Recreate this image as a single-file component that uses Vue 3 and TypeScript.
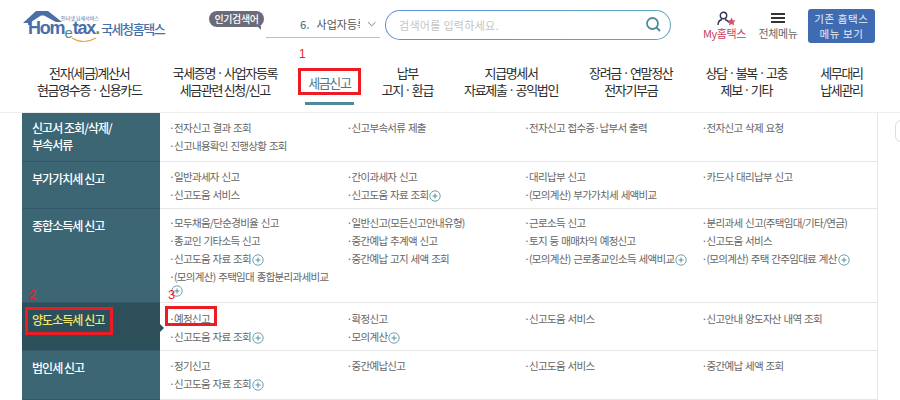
<template>
  <div class="page">
    <header class="top">
      <a class="logo">
        <svg class="house" width="42" height="26" viewBox="0 0 42 26">
          <path d="M0 14 L13 2 H25 L39 13 H33 L21 6.5 H18 L8 13 V16 H5 V14 Z" fill="#4a6fa8" />
        </svg>
        <span class="logo-sub">인터넷 납세서비스</span>
        <span class="logo-word">Hom<em>e</em>tax<i>.</i></span>
        <svg class="swoosh" width="26" height="6" viewBox="0 0 26 6">
          <path d="M1 1 Q12 8 25 1" fill="none" stroke="#e6a94a" stroke-width="1.2" />
        </svg>
        <span class="logo-name">국세청홈택스</span>
      </a>
      <span class="pill">인기검색어</span>
      <div class="rank">
        <span class="rank-no">6.</span>
        <span class="rank-text">사업자등록</span>
        <svg width="10" height="6" viewBox="0 0 10 6"><path d="M1 1 L5 5 L9 1" fill="none" stroke="#777" /></svg>
      </div>
      <div class="search">
        <span class="placeholder">검색어를 입력하세요.</span>
        <svg width="18" height="18" viewBox="0 0 18 18">
          <circle cx="7.5" cy="7.5" r="5.5" fill="none" stroke="#4f8a9a" stroke-width="1.8" />
          <path d="M11.6 11.6 L15 15" stroke="#4f8a9a" stroke-width="2" />
        </svg>
      </div>
      <div class="tool my">
        <svg width="20" height="16" viewBox="0 0 20 16">
          <circle cx="6.5" cy="4.5" r="3.2" fill="none" stroke="#2d3550" stroke-width="1.4" />
          <path d="M1 14 C1 10 3 9 5 8.5 M8 8.5 C9.5 9 11 10 12 11.5" fill="none" stroke="#2d3550" stroke-width="1.4" />
          <path d="M14.5 6.5 L15.8 9.2 L18.6 9.6 L16.6 11.6 L17.1 14.5 L14.5 13.1 L11.9 14.5 L12.4 11.6 L10.4 9.6 L13.2 9.2 Z" fill="#d9506a" />
        </svg>
        <span>My홈택스</span>
      </div>
      <div class="tool all">
        <div class="burger"><b></b><b></b><b></b></div>
        <span>전체메뉴</span>
      </div>
      <button class="old">기존 홈택스<br />메뉴 보기</button>
    </header>

    <nav class="gnb">
      <a v-for="item in navItems" :key="item[0]" :class="{ on: item[0] === '세금신고' }">
        <span>{{ item[0] }}</span>
        <span v-if="item[1]">{{ item[1] }}</span>
      </a>
    </nav>

    <main class="board">
      <section v-for="row in rows" :key="row.title" class="row" :class="{ active: row.active }" :style="{ height: row.height + 'px' }">
        <h3 v-html="row.title"></h3>
        <ul>
          <li v-for="(link, i) in row.links" :key="i">
            <span class="link">{{ link.replace('+', '') }}<svg v-if="link.endsWith('+')" class="plus" width="12" height="12" viewBox="0 0 12 12"><circle cx="6" cy="6" r="5.2" fill="none" stroke="#6ea1ad" /><path d="M3.5 6 H8.5 M6 3.5 V8.5" stroke="#5a8f9c" /></svg></span>
          </li>
        </ul>
      </section>

      <div class="mark box-tab"></div>
      <div class="mark box-row"></div>
      <div class="mark box-link"></div>
      <span class="num num-1">1</span>
      <span class="num num-2">2</span>
      <span class="num num-3">3</span>
    </main>
    <div class="side-tab"></div>
  </div>
</template>

<script setup lang="ts">
interface TaxRow {
  title: string
  height: number
  active?: boolean
  links: string[]
}

const navItems: string[][] = [
  ['전자(세금)계산서', '현금영수증 · 신용카드'],
  ['국세증명 · 사업자등록', '세금관련 신청/신고'],
  ['세금신고'],
  ['납부', '고지 · 환급'],
  ['지급명세서', '자료제출 · 공익법인'],
  ['장려금 · 연말정산', '전자기부금'],
  ['상담 · 불복 · 고충', '제보 · 기타'],
  ['세무대리', '납세관리'],
]

const rows: TaxRow[] = [
  {
    title: '신고서 조회/삭제/<br>부속서류',
    height: 49,
    links: ['전자신고 결과 조회', '신고부속서류 제출', '전자신고 접수증·납부서 출력', '전자신고 삭제 요청', '신고내용확인 진행상황 조회'],
  },
  {
    title: '부가가치세 신고',
    height: 47,
    links: ['일반과세자 신고', '간이과세자 신고', '대리납부 신고', '카드사 대리납부 신고', '신고도움 서비스', '신고도움 자료 조회+', '(모의계산) 부가가치세 세액비교'],
  },
  {
    title: '종합소득세 신고',
    height: 94,
    links: [
      '모두채움/단순경비율 신고', '일반신고(모든신고안내유형)', '근로소득 신고', '분리과세 신고(주택임대/기타/연금)',
      '종교인 기타소득 신고', '중간예납 추계액 신고', '토지 등 매매차익 예정신고', '신고도움 서비스',
      '신고도움 자료 조회+', '중간예납 고지 세액 조회', '(모의계산) 근로종교인소득 세액비교+', '(모의계산) 주택 간주임대료 계산+',
      '(모의계산) 주택임대 종합분리과세비교+',
    ],
  },
  {
    title: '양도소득세 신고',
    height: 48,
    active: true,
    links: ['예정신고', '확정신고', '신고도움 서비스', '신고안내 양도자산 내역 조회', '신고도움 자료 조회+', '모의계산+'],
  },
  {
    title: '법인세 신고',
    height: 49,
    links: ['정기신고', '중간예납신고', '신고도움 서비스', '중간예납 세액 조회', '신고도움 자료 조회+'],
  },
]
</script>

<style>
html,
body {
  overflow: hidden;
  background: #fff;
}
</style>

<style scoped>
.page {
  position: relative;
  width: 900px;
  height: 400px;
  overflow: hidden;
  font-family: "Noto Sans CJK KR", "Noto Sans", sans-serif;
}

.top {
  display: flex;
  align-items: flex-start;
  height: 50px;
}

.logo {
  position: relative;
  display: block;
  flex: none;
  width: 209px;
  height: 50px;
}
.house {
  position: absolute;
  left: 23px;
  top: 9px;
}
.logo-sub {
  position: absolute;
  left: 61px;
  top: 15px;
  font-size: 5px;
  line-height: 6px;
  color: #4a6fa8;
  white-space: nowrap;
}
.logo-word {
  position: absolute;
  left: 28px;
  top: 21px;
  font: bold 18px/14px "Liberation Sans", sans-serif;
  letter-spacing: -1.2px;
  color: #4a6fa8;
  white-space: nowrap;
}
.logo-word em {
  position: relative;
  top: 4px;
  font-size: 15px;
  font-style: normal;
  font-weight: normal;
  letter-spacing: 0;
  color: #4f8a9a;
}
.logo-word i {
  font-style: normal;
  color: #5aa55a;
}
.swoosh {
  position: absolute;
  left: 71px;
  top: 37px;
}
.logo-name {
  position: absolute;
  left: 101px;
  top: 20px;
  font-size: 13px;
  line-height: 18px;
  font-weight: 500;
  letter-spacing: -1.4px;
  color: #4a6fa8;
  white-space: nowrap;
}

.pill {
  position: relative;
  flex: none;
  width: 55px;
  height: 16px;
  margin-top: 11px;
  border-radius: 8px;
  background: #6a6a78;
  color: #fff;
  font-size: 10px;
  font-weight: 500;
  line-height: 16px;
  text-align: center;
  letter-spacing: -0.4px;
}
.pill::after {
  content: "";
  position: absolute;
  right: 3px;
  bottom: -3px;
  border-top: 4px solid #6a6a78;
  border-left: 4px solid transparent;
}

.rank {
  display: flex;
  align-items: center;
  flex: none;
  box-sizing: border-box;
  width: 114px;
  height: 27px;
  margin: 11px 0 0 2px;
  padding: 0 4px 0 34px;
  border-bottom: 1px solid #a9c4cc;
  font-size: 11px;
  color: #555;
}
.rank-no {
  margin-right: 7px;
  color: #4f7f8e;
  font-weight: 500;
}
.rank-text {
  width: 46px;
  overflow: hidden;
  white-space: nowrap;
}
.rank svg {
  margin-left: 7px;
}

.search {
  display: flex;
  align-items: center;
  justify-content: space-between;
  flex: none;
  box-sizing: border-box;
  width: 286px;
  height: 30px;
  margin: 10px 0 0 5px;
  padding: 0 7px 0 13px;
  border: 1.5px solid transparent;
  border-radius: 15px;
  background: linear-gradient(#fff, #fff) padding-box, linear-gradient(90deg, #5f8fe0, #5ea5b8) border-box;
}
.placeholder {
  font-size: 11px;
  color: #c4c4c4;
  letter-spacing: 0.3px;
}

.tool {
  display: flex;
  flex-direction: column;
  align-items: center;
  flex: none;
  font-size: 11px;
  line-height: 14px;
  letter-spacing: -0.4px;
  white-space: nowrap;
}
.my {
  width: 45px;
  margin: 11px 0 0 31px;
  color: #c8405a;
}
.my svg {
  margin-bottom: -1px;
  margin-left: 4px;
}
.all {
  width: 40px;
  margin: 13px 0 0 11px;
  color: #666;
}
.burger {
  display: flex;
  flex-direction: column;
  gap: 2px;
  width: 14px;
  margin-bottom: 3px;
}
.burger b {
  height: 2px;
  background: #333;
}
.old {
  flex: none;
  width: 67px;
  height: 34px;
  margin: 9px 0 0 10px;
  padding: 0;
  border: 0;
  border-radius: 3px;
  background: #3f6bb3;
  color: #e8edf6;
  font-family: inherit;
  font-size: 10.5px;
  line-height: 15px;
  letter-spacing: 0.6px;
}

.gnb {
  display: flex;
  gap: 31px;
  box-sizing: border-box;
  height: 63px;
  padding: 14px 0 0 37px;
  border-bottom: 1px solid #eee;
}
.gnb a {
  position: relative;
  display: flex;
  flex-direction: column;
  align-items: center;
  font-size: 13px;
  line-height: 17px;
  color: #2b2b2b;
  letter-spacing: -1.35px;
  white-space: nowrap;
}
.gnb a:nth-child(7),
.gnb a:nth-child(8) {
  margin-left: 2px;
}
.gnb a.on {
  padding-top: 10px;
  color: #4b7886;
}
.gnb a.on::after {
  content: "";
  position: absolute;
  left: -3px;
  right: -3px;
  top: 38px;
  height: 3px;
  background: #4f8a9a;
}

.board {
  position: relative;
  height: 288px;
  margin: 0 22px;
  border-right: 1px solid #e6e6e6;
}
.row {
  display: grid;
  grid-template-columns: 138px 1fr;
  box-sizing: border-box;
  border-bottom: 1px solid #e6e6e6;
}
.row h3 {
  position: relative;
  margin: 0 0 -1px;
  padding: 8px 0 0 10px;
  background: #3d6675;
  border-bottom: 1px solid #34586a;
  color: #fff;
  font-size: 12px;
  line-height: 17px;
  font-weight: 500;
  letter-spacing: -0.95px;
}
.row:first-child h3 {
  padding-top: 6px;
}
.row.active h3 {
  background: #2d4f5a;
  color: #f2e66b;
}
.row.active h3::after {
  content: "";
  position: absolute;
  right: -4px;
  top: 21px;
  border-left: 4px solid #2d4f5a;
  border-top: 4px solid transparent;
  border-bottom: 4px solid transparent;
}
.row ul {
  display: grid;
  grid-template-columns: repeat(4, 177.5px);
  grid-auto-rows: min-content;
  margin: 0;
  padding: 6px 0 0 9px;
  list-style: none;
}
.row:nth-child(3) ul {
  padding-top: 5px;
}
.row:nth-child(4) ul {
  padding-top: 7px;
}
.row li {
  font-size: 10.5px;
  line-height: 18px;
  color: #666;
  letter-spacing: -0.7px;
  word-spacing: 1px;
  white-space: nowrap;
}
.row li::before {
  content: "·";
  display: inline-block;
  width: 5px;
}
.plus {
  margin-left: 1px;
  vertical-align: -3px;
}
.row li:nth-child(13) .plus {
  display: block;
  margin: -1px 0 0 2px;
}

.mark {
  position: absolute;
  box-sizing: border-box;
  border: 3px solid #ed1c24;
}
.box-tab {
  left: 276px;
  top: -45px;
  width: 63px;
  height: 27px;
}
.box-row {
  left: 3px;
  top: 194px;
  width: 88px;
  height: 28px;
}
.box-link {
  left: 143px;
  top: 193px;
  width: 52px;
  height: 20px;
}
.num {
  position: absolute;
  color: #ed1c24;
  font: 13px/14px "Liberation Sans", sans-serif;
}
.num-1 {
  left: 277px;
  top: -66px;
  font-size: 12px;
}
.num-2 {
  left: 7px;
  top: 175px;
}
.num-3 {
  left: 146px;
  top: 175px;
}
.side-tab {
  position: absolute;
  left: 895px;
  top: 120px;
  width: 12px;
  height: 20px;
  border: 1px solid #ddd;
  border-radius: 6px;
}
</style>
